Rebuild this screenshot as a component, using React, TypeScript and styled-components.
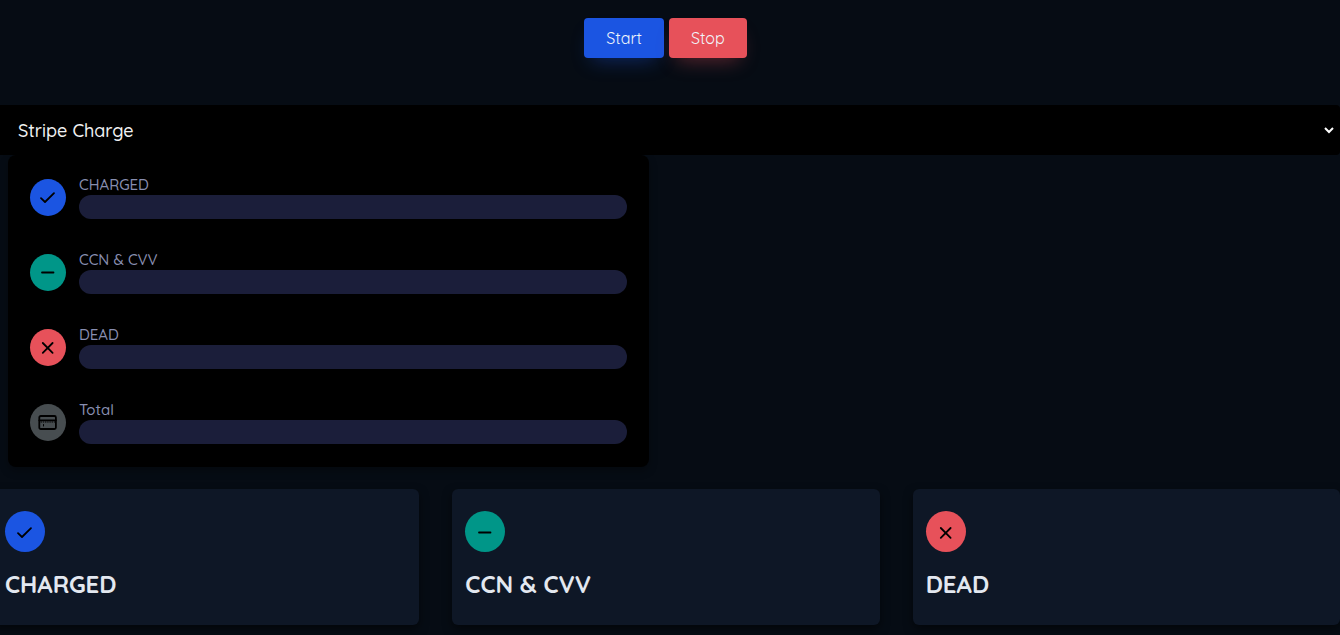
import React from "react";
import styled, { createGlobalStyle } from "styled-components";

const GlobalStyle = createGlobalStyle`
  *, *::before, *::after { box-sizing: border-box; }
  body {
    margin: 0;
    background: #060c14;
    color: #e3e8f0;
    font-family: Quicksand, Lato, sans-serif;
    font-size: 16px;
    overflow-x: hidden;
  }
`;

type Tone = "primary" | "success" | "danger" | "neutral";

const tones: Record<Tone, string> = {
  primary: "#1b55e2",
  success: "#009688",
  danger: "#e7515a",
  neutral: "#474d50",
};

const Toolbar = styled.div`
  display: flex;
  justify-content: center;
  gap: 5px;
  padding: 18px 9px 47px 0;
`;

const Button = styled.button<{ $tone: Tone }>`
  height: 40px;
  padding: 0 22px;
  border: 0;
  border-radius: 4px;
  background: ${(p) => tones[p.$tone]};
  box-shadow: 0 10px 20px -8px ${(p) => tones[p.$tone]}66;
  color: #f1f5fb;
  font: inherit;
  cursor: pointer;
`;

const SelectField = styled.div`
  position: relative;
`;

const Select = styled.select`
  display: block;
  width: 100%;
  height: 50px;
  padding: 0 32px 0 18px;
  border: 0;
  border-radius: 0 4px 4px 0;
  appearance: none;
  background: #000;
  color: #f1f2f3;
  font: 500 18px Quicksand, Inter, sans-serif;
`;

const Chevron = styled.svg`
  position: absolute;
  right: 6px;
  top: 22px;
  width: 10px;
  height: 7px;
  pointer-events: none;
`;

const Panel = styled.section`
  display: flex;
  flex-direction: column;
  gap: 31px;
  width: calc(50% - 29px);
  margin: 0 0 22px 8px;
  padding: 20px 22px 23px;
  border-radius: 8px;
  background: #000;
  box-shadow: 0 4px 8px rgba(0, 0, 0, 0.3);
`;

const Row = styled.div`
  display: flex;
  align-items: center;
  gap: 13px;
`;

const Badge = styled.span<{ $tone: Tone; $large?: boolean }>`
  display: flex;
  flex: none;
  align-items: center;
  justify-content: center;
  width: ${(p) => (p.$large ? 40 : 36)}px;
  height: ${(p) => (p.$large ? 41 : 37)}px;
  border-radius: 50%;
  background: ${(p) => tones[p.$tone]};
  color: #000;
`;

const RowBody = styled.div`
  flex: 1;
`;

const RowLabel = styled.div`
  color: #888eb0;
  font: 500 15px/20px Quicksand, Inter, sans-serif;
`;

const Track = styled.div`
  height: 24px;
  border-radius: 12px;
  background: #1b1e3a;
`;

const Cards = styled.div`
  display: grid;
  grid-template-columns: repeat(3, 1fr);
  gap: 33px;
  margin: 0 0 10px -8px;
`;

const Card = styled.section`
  padding: 22px 13px 27px;
  border-radius: 6px;
  background: #0e1726;
  box-shadow: 0 4px 10px rgba(0, 0, 0, 0.5);
`;

const CardTitle = styled.h2`
  margin: 18px 0 0;
  font-size: 24px;
  font-weight: 700;
  line-height: 28px;
`;

const shapes: Record<Tone, React.ReactNode> = {
  primary: <path d="M5 13.2 9 17 18 8.2" />,
  success: <path d="M6 12.5h11.5" />,
  danger: <path d="M6.8 8 16.6 17.8M16.6 8 6.8 17.8" />,
  neutral: (
    <>
      <rect x="3.3" y="6" width="16.6" height="13" rx="1.5" />
      <path d="M3.3 10.3h16.6" />
      <path d="M7.5 14.5v1.5" strokeWidth="1" />
      <path d="M5 12h14" strokeWidth="1" strokeDasharray="0.6 1.6" />
    </>
  ),
};

function Icon({ tone, large }: { tone: Tone; large?: boolean }) {
  return (
    <Badge $tone={tone} $large={large}>
      <svg
        width="24"
        height="24"
        viewBox="0 0 24 24"
        fill="none"
        stroke="currentColor"
        strokeWidth={1.8}
        strokeLinecap="round"
        strokeLinejoin="round"
        aria-hidden="true"
      >
        {shapes[tone]}
      </svg>
    </Badge>
  );
}

const counters: { label: string; tone: Tone }[] = [
  { label: "CHARGED", tone: "primary" },
  { label: "CCN & CVV", tone: "success" },
  { label: "DEAD", tone: "danger" },
  { label: "Total", tone: "neutral" },
];

export default function App() {
  return (
    <main>
      <GlobalStyle />
      <Toolbar>
        <Button type="button" $tone="primary">Start</Button>
        <Button type="button" $tone="danger">Stop</Button>
      </Toolbar>
      <SelectField>
        <Select aria-label="Gateway" defaultValue="stripe">
          <option value="stripe">Stripe Charge</option>
        </Select>
        <Chevron viewBox="0 0 10 7" fill="none" stroke="#fff" strokeWidth="2" aria-hidden="true">
          <path d="M1 1 5 5 9 1" />
        </Chevron>
      </SelectField>
      <Panel>
        {counters.map((c) => (
          <Row key={c.label}>
            <Icon tone={c.tone} />
            <RowBody>
              <RowLabel>{c.label}</RowLabel>
              <Track />
            </RowBody>
          </Row>
        ))}
      </Panel>
      <Cards>
        {counters.slice(0, 3).map((c) => (
          <Card key={c.label}>
            <Icon tone={c.tone} large />
            <CardTitle>{c.label}</CardTitle>
          </Card>
        ))}
      </Cards>
    </main>
  );
}
